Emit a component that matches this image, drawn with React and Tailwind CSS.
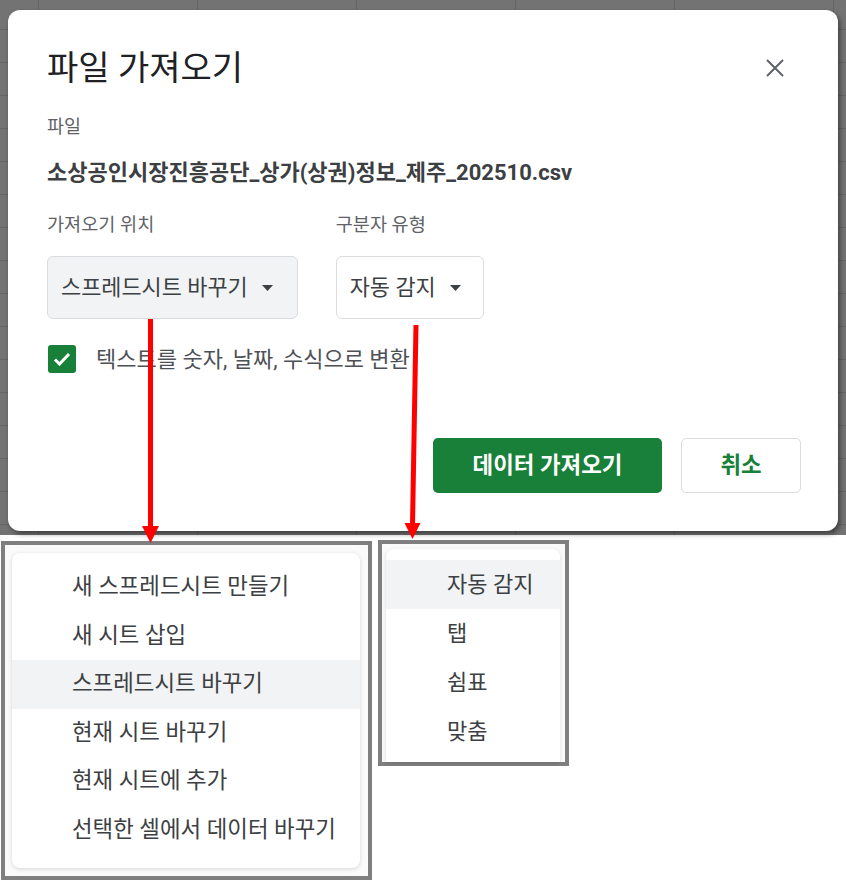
import React from 'react';

const placeOptions = [
  '새 스프레드시트 만들기',
  '새 시트 삽입',
  '스프레드시트 바꾸기',
  '현재 시트 바꾸기',
  '현재 시트에 추가',
  '선택한 셀에서 데이터 바꾸기',
];

const separatorOptions = ['자동 감지', '탭', '쉼표', '맞춤'];

const Caret = () => (
  <svg width="11" height="6" viewBox="0 0 11 6" className="shrink-0">
    <path d="M0 0h11L5.5 6z" fill="#3c4043" />
  </svg>
);

const SelectBox = ({ label, filled }) => (
  <div
    className={`flex items-center h-[63px] pl-[13px] gap-[14px] rounded-[6px] border border-[#dadce0] ${
      filled ? 'bg-[#f1f3f4] pr-[24px]' : 'bg-white pr-[22px]'
    }`}
  >
    <span className="text-[21.9px] leading-none text-[#3c4043]">{label}</span>
    <Caret />
  </div>
);

const App = () => {
  return (
    <div className="relative w-[846px] h-[881px] bg-white font-['Roboto','Noto_Sans_CJK_KR',sans-serif] overflow-hidden">
      {/* dialog over the sheet backdrop */}
      <div className="h-[535px] pt-[10px] pl-[8px] pr-[8px] bg-[#737373] [background-image:linear-gradient(to_right,#656565_1px,transparent_1px),linear-gradient(to_bottom,#656565_1px,transparent_1px)] [background-size:159px_33px] [background-position:38px_29px]">
        <div className="h-[521px] bg-white rounded-[12px] shadow-[2px_3px_5px_rgba(0,0,0,0.45)] pl-[39px] pr-[37px] pt-[38px]">
          <div className="flex items-center justify-between h-[40px]">
            <h1 className="text-[34px] leading-none text-[#202124]">파일 가져오기</h1>
            <svg width="18" height="18" viewBox="0 0 18 18" className="mr-[17px]">
              <path d="M1 1l16 16M17 1L1 17" stroke="#5f6368" strokeWidth="2" />
            </svg>
          </div>

          <p className="mt-[28px] h-[24px] flex items-center text-[18.5px] text-[#5f6368]">파일</p>
          <p className="mt-[18px] h-[28px] flex items-center text-[22px] font-bold text-[#3c4043]">
            소상공인시장진흥공단_상가(상권)정보_제주_202510.csv
          </p>

          <div className="mt-[28px] flex items-start gap-[38px]">
            <div className="flex flex-col gap-[18px]">
              <span className="h-[24px] flex items-center text-[18.6px] text-[#5f6368]">가져오기 위치</span>
              <SelectBox label="스프레드시트 바꾸기" filled />
            </div>
            <div className="flex flex-col gap-[18px]">
              <span className="h-[24px] flex items-center text-[18.6px] text-[#5f6368]">구분자 유형</span>
              <SelectBox label="자동 감지" />
            </div>
          </div>

          <div className="mt-[26px] flex items-center gap-[20px] h-[28px]">
            <div className="w-[28px] h-[28px] ml-[1px] rounded-[3px] bg-[#188038] flex items-center justify-center">
              <svg width="18" height="14" viewBox="0 0 18 14">
                <path d="M2 7.5l4.5 4.5L16 2" fill="none" stroke="white" strokeWidth="3" />
              </svg>
            </div>
            <span className="text-[22px] text-[#4d5156]">텍스트를 숫자, 날짜, 수식으로 변환</span>
          </div>

          <div className="mt-[65px] flex justify-end gap-[19px]">
            <button className="w-[229px] h-[55px] rounded-[5px] bg-[#188038] text-white text-[22.4px] font-bold">
              데이터 가져오기
            </button>
            <button className="w-[120px] h-[55px] rounded-[5px] bg-white border border-[#dadce0] text-[#188038] text-[22.4px] font-bold">
              취소
            </button>
          </div>
        </div>
      </div>

      {/* dropdown crops */}
      <div className="flex items-start gap-[6px] pl-[1px] mt-[5px]">
        <div className="mt-[1px] w-[371px] h-[339px] border-4 border-[#7f7f7f] bg-[#fafafa] pt-[8px] pl-[7px] pr-[8px]">
          <div className="h-[315px] bg-white rounded-[8px] shadow-[0_1px_4px_rgba(0,0,0,0.15)] pt-[10px]">
            {placeOptions.map((item, i) => (
              <div
                key={item}
                className={`h-[48.5px] flex items-center pl-[60px] text-[22.4px] text-[#3c4043] ${
                  i === 2 ? 'bg-[#f1f3f4]' : ''
                }`}
              >
                {item}
              </div>
            ))}
          </div>
        </div>

        <div className="w-[191px] h-[226px] border-4 border-[#7f7f7f] bg-[#fafafa] pt-[5px] pl-[4px] pr-[5px] flex">
          <div className="flex-1 h-[213px] bg-white rounded-t-[8px] shadow-[0_1px_4px_rgba(0,0,0,0.12)] pt-[11px]">
            {separatorOptions.map((item, i) => (
              <div
                key={item}
                className={`h-[49px] flex items-center pl-[61px] text-[22px] text-[#3c4043] ${
                  i === 0 ? 'bg-[#f1f3f4]' : ''
                }`}
              >
                {item}
              </div>
            ))}
          </div>
        </div>
      </div>

      {/* red arrows */}
      <svg className="absolute inset-0 pointer-events-none" width="846" height="881">
        <line x1="150.5" y1="319" x2="150.5" y2="528" stroke="#ff0000" strokeWidth="5" />
        <path d="M142 526h17l-8.5 17z" fill="#ff0000" />
        <line x1="416" y1="325" x2="412.5" y2="525" stroke="#ff0000" strokeWidth="5" />
        <path d="M404.5 523h16l-8 16z" fill="#ff0000" />
      </svg>
    </div>
  );
};

export default App;
